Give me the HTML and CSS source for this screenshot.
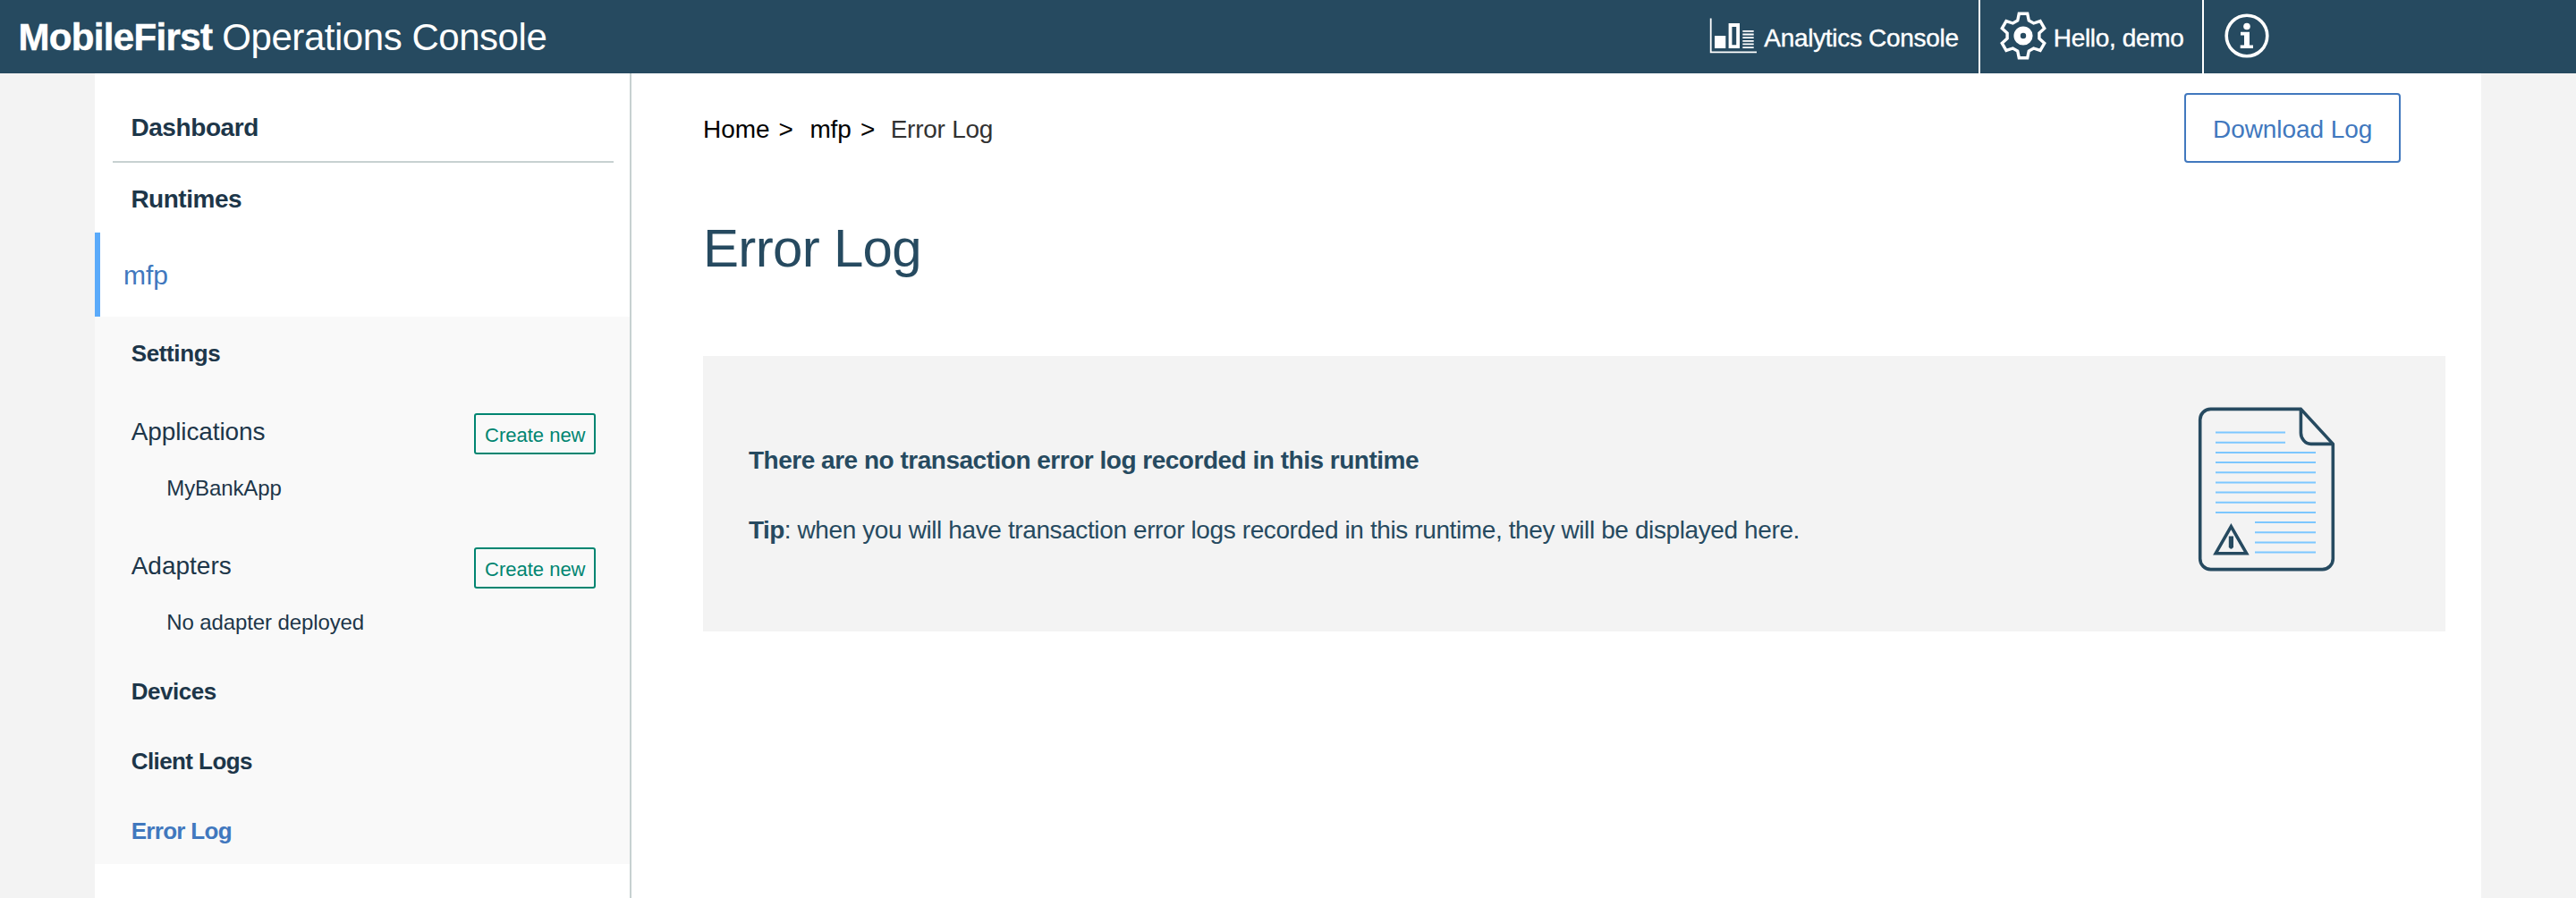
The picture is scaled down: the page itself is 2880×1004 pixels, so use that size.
FILE: index.html
```html
<!DOCTYPE html>
<html lang="en">
<head>
<meta charset="utf-8">
<title>MobileFirst Operations Console</title>
<link rel="stylesheet" href="styles.css">
</head>
<body>
<header class="topbar">
  <div class="brand"><strong>MobileFirst</strong><span>Operations Console</span></div>
  <nav class="topnav">
    <a class="topnav-item analytics">
      <svg width="56" height="82" viewBox="10 0 56 82" fill="none" stroke="#fff">
        <path d="M12.7 20.5V58.4H64" stroke-width="1.8"/>
        <path d="M17 40h12.3v14H17z" fill="#fff" stroke="none"/>
        <path d="M34.5 28h8.6v24.2h-8.6z" stroke-width="3.8"/>
        <path d="M48.3 34.8h12.4M48.3 38.5h12.4M48.3 42.1h12.4M48.3 45.8h12.4M48.3 49.4h12.4M48.3 53.1h12.4" stroke-width="1.8"/>
      </svg>
      <span>Analytics Console</span>
    </a>
    <a class="topnav-item user">
      <svg width="56" height="82" viewBox="14 0 56 82" fill="none" stroke="#fff">
        <path transform="translate(42 40)" stroke-width="3.4" d="M-4.7-24.7H4.7L6.3-17 11.6-14 19-16.4 23.7-8.3 17.9-3V3L23.7 8.3 19 16.4 11.6 14 6.3 17 4.7 24.7H-4.7L-6.3 17-11.6 14-19 16.4-23.7 8.3-17.9 3V-3L-23.7-8.3-19-16.4-11.6-14-6.3-17Z"/>
        <circle cx="42" cy="40" r="6.9" stroke-width="7.4"/>
      </svg>
      <span>Hello, demo</span>
    </a>
    <a class="topnav-item info">
      <svg width="52" height="82" viewBox="26 0 52 82">
        <circle cx="52" cy="40" r="22.8" fill="none" stroke="#fff" stroke-width="3.6"/>
        <circle cx="52" cy="29.5" r="3.8" fill="#fff"/>
        <path fill="#fff" d="M45 35.8h10v14.7h4v3.6H44.7v-3.6H49V39.4h-4z"/>
      </svg>
    </a>
  </nav>
</header>
<div class="page">
  <aside class="sidebar">
    <div class="dashboard">Dashboard</div>
    <div class="runtimes">Runtimes</div>
    <div class="runtime-name">mfp</div>
    <div class="submenu">
      <div class="menu-link">Settings</div>
      <div class="menu-group">
        <span>Applications</span>
        <button class="create">Create new</button>
      </div>
      <div class="menu-child">MyBankApp</div>
      <div class="menu-group adapters">
        <span>Adapters</span>
        <button class="create">Create new</button>
      </div>
      <div class="menu-child">No adapter deployed</div>
      <div class="menu-link devices">Devices</div>
      <div class="menu-link client-logs">Client Logs</div>
      <div class="menu-link active">Error Log</div>
    </div>
  </aside>
  <main class="main">
    <div class="toolbar">
      <div class="breadcrumb">
        <span class="crumb-home">Home</span><span class="crumb-sep">&gt;</span><span class="crumb-mfp">mfp</span><span class="crumb-sep">&gt;</span><span class="crumb-current">Error Log</span>
      </div>
      <button class="download">Download Log</button>
    </div>
    <h1>Error Log</h1>
    <section class="panel">
      <div class="panel-text">
        <p class="panel-title">There are no transaction error log recorded in this runtime</p>
        <p class="panel-tip"><strong>Tip</strong>: when you will have transaction error logs recorded in this runtime, they will be displayed here.</p>
      </div>
      <svg class="document" width="158" height="190" viewBox="36 24 158 190" fill="none" stroke="#264a60" stroke-width="3.6">
        <path stroke="#7cc7ff" stroke-width="2" d="M57 53.6h78M57 64.7h78M57 76h112M57 87.1h112M57 98.3h112M57 109.4h112M57 120.6h112M57 131.8h112M57 143h112M101 154h68M101 165.3h68M101 176.4h68M101 187.6h68"/>
        <path d="M152.3 27.4H51.5A11.8 11.8 0 0 0 39.7 39.2V194.8A11.8 11.8 0 0 0 51.5 206.6H176.5A11.8 11.8 0 0 0 188.3 194.8V66.4Z"/>
        <path d="M152.4 27.4V54C152.4 60 157 66.4 163.5 66.4H188.3"/>
        <path d="M74.4 158.6 57.2 188.7H91.6Z"/>
        <path fill="#264a60" stroke="none" d="M71.8 169.5h5.2v12.2q-2.6 4-5.2 0z"/>
      </svg>
    </section>
  </main>
</div>
</body>
</html>
```
FILE: styles.css
```css
* { box-sizing: border-box; }

body {
  margin: 0;
  height: 1004px;
  overflow: hidden;
  background: #f3f3f3;
  font-family: "Liberation Sans", Arial, sans-serif;
  font-size: 28px;
  line-height: 31px;
  color: #1d3649;
}

h1, p { margin: 0; }

span { white-space: nowrap; }

button {
  display: block;
  font-family: inherit;
  background: transparent;
  white-space: nowrap;
  text-align: left;
}

.topbar {
  display: flex;
  justify-content: space-between;
  height: 82px;
  background: #264a60;
  color: #fff;
}

.brand {
  display: flex;
  gap: 11px;
  padding-left: 20.4px;
  font-size: 42px;
  line-height: 83px;
  letter-spacing: -0.46px;
}
.brand strong {
  letter-spacing: -0.64px;
  -webkit-text-stroke: 0.5px #fff;
}

.topnav { display: flex; line-height: 85px; }
.topnav-item { display: flex; height: 82px; }
.topnav-item svg { flex: none; }
.topnav-item span { -webkit-text-stroke: 0.4px #fff; }

.analytics {
  width: 304px;
  gap: 6.3px;
  border-right: 2px solid #fff;
  letter-spacing: -0.3px;
}
.user {
  width: 250px;
  gap: 5.8px;
  padding-left: 20px;
  border-right: 2px solid #fff;
  letter-spacing: -0.34px;
}
.info { width: 416px; padding-left: 22px; }

.page {
  display: flex;
  width: 2668px;
  height: 922px;
  margin-left: 106px;
  background: #fff;
}

.sidebar {
  width: 600px;
  border-right: 2px solid #c7d1d1;
}

.dashboard, .runtimes { font-weight: bold; }
.dashboard {
  height: 100px;
  margin: 0 18px 0 20px;
  padding: 45px 0 0 20.4px;
  border-bottom: 2px solid #c7d1d1;
  letter-spacing: -0.41px;
}
.runtimes {
  height: 78px;
  padding: 25px 0 0 40.4px;
  letter-spacing: -0.49px;
}
.runtime-name {
  height: 94px;
  padding: 31px 0 0 26px;
  border-left: 6px solid #5aaafa;
  font-size: 30px;
  line-height: 33px;
  color: #4178be;
}

.submenu {
  height: 612px;
  padding: 26px 38px 0 40.7px;
  background: #f9f9f9;
}

.menu-link {
  font-size: 26px;
  line-height: 30px;
  font-weight: bold;
  letter-spacing: -0.36px;
}
.devices { margin-top: 49px; letter-spacing: -0.48px; }
.client-logs { margin-top: 48px; letter-spacing: -0.58px; }
.active { margin-top: 48px; color: #4178be; letter-spacing: -0.7px; }

.menu-group {
  display: flex;
  justify-content: space-between;
  margin-top: 52px;
  letter-spacing: -0.1px;
}
.menu-group.adapters { margin-top: 53px; letter-spacing: 0; }
.menu-group span { padding-top: 5px; }

.menu-child {
  margin-top: 24px;
  padding-left: 39.6px;
  font-size: 24px;
  line-height: 27px;
  letter-spacing: -0.11px;
}

.create {
  width: 136px;
  height: 46px;
  padding: 10px 0 7px 10px;
  border: 2px solid #008571;
  border-radius: 3px;
  font-size: 22px;
  line-height: 25px;
  color: #008571;
}

.main { flex: 1; padding: 22px 40px 0 80px; }

.toolbar {
  display: flex;
  justify-content: space-between;
  padding-right: 50px;
}

.breadcrumb { display: flex; padding-top: 25px; color: #000; }
.crumb-home { margin-right: 9.8px; }
.crumb-mfp { margin: 0 10.4px 0 18.7px; letter-spacing: -0.25px; }
.crumb-current { margin-left: 17.4px; color: #323232; letter-spacing: -0.25px; }

.download {
  width: 242px;
  height: 78px;
  padding: 23px 0 20px 30px;
  border: 2px solid #4178be;
  border-radius: 4px;
  font-size: 28px;
  line-height: 31px;
  letter-spacing: -0.07px;
  color: #4178be;
}

h1 {
  margin-top: 62px;
  font-size: 60px;
  line-height: 67px;
  font-weight: normal;
  letter-spacing: -0.68px;
  color: #264a60;
}

.panel {
  display: flex;
  justify-content: space-between;
  height: 308px;
  margin-top: 87px;
  padding: 56px 120px 0 51px;
  background: #f3f3f3;
  color: #264a60;
}

.panel-text { padding-top: 45px; }
.panel-title { font-weight: bold; letter-spacing: -0.49px; }
.panel-tip { margin-top: 47px; letter-spacing: -0.39px; }
.panel-tip strong { letter-spacing: -0.59px; }
```
